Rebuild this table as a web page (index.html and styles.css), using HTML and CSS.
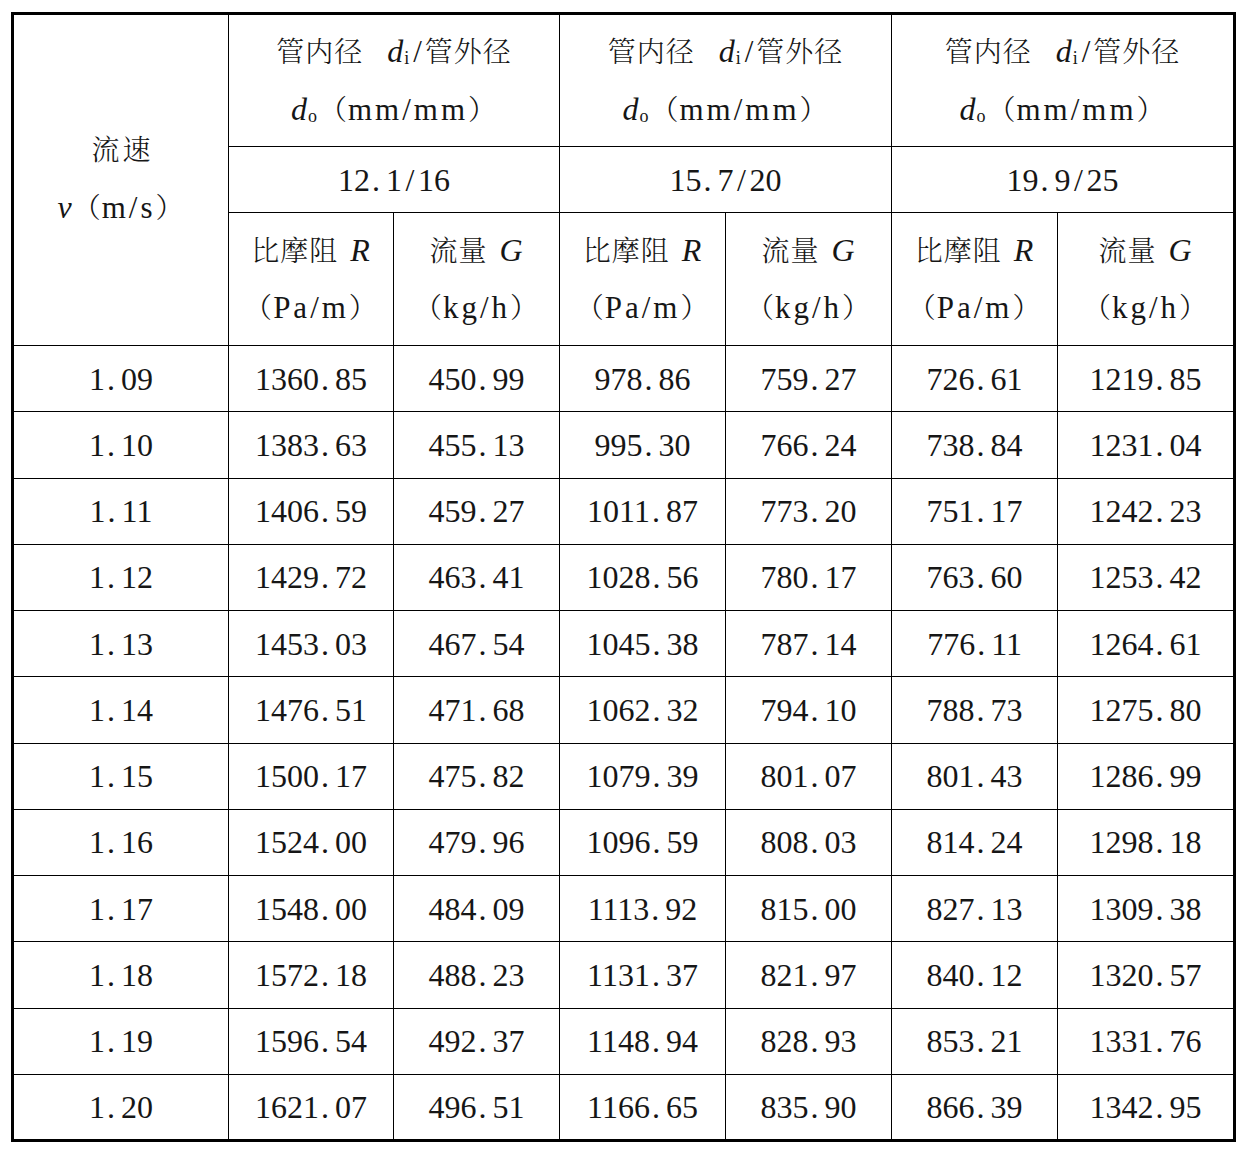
FILE: index.html
```html
<!DOCTYPE html>
<html lang="zh-CN">
<head>
<meta charset="utf-8">
<title>流速表</title>
<link rel="stylesheet" href="styles.css">
</head>
<body>
<table class="tbl">
  <colgroup>
    <col class="c0"><col class="c1"><col class="c2"><col class="c3"><col class="c4"><col class="c5"><col class="c6">
  </colgroup>
  <tbody>
    <tr class="h1">
      <td rowspan="3" class="head"><span class="wide">流速</span><br><i>v</i>（<span class="lt">m/s</span>）</td>
      <td colspan="2" class="head">管内径<i class="gap">d</i><sub>i</sub><span class="lt sep">/</span>管外径<br><i>d</i><sub>o</sub>（<span class="lt">mm/mm</span>）</td>
      <td colspan="2" class="head">管内径<i class="gap">d</i><sub>i</sub><span class="lt sep">/</span>管外径<br><i>d</i><sub>o</sub>（<span class="lt">mm/mm</span>）</td>
      <td colspan="2" class="head">管内径<i class="gap">d</i><sub>i</sub><span class="lt sep">/</span>管外径<br><i>d</i><sub>o</sub>（<span class="lt">mm/mm</span>）</td>
    </tr>
    <tr class="h2">
      <td colspan="2" class="num">12<span class="pt">.</span>1<span class="sl">/</span>16</td>
      <td colspan="2" class="num">15<span class="pt">.</span>7<span class="sl">/</span>20</td>
      <td colspan="2" class="num">19<span class="pt">.</span>9<span class="sl">/</span>25</td>
    </tr>
    <tr class="h3">
      <td class="head">比摩阻<i class="sym">R</i><br>（<span class="lt">Pa/m</span>）</td>
      <td class="head">流量<i class="sym">G</i><br>（<span class="lt">kg/h</span>）</td>
      <td class="head">比摩阻<i class="sym">R</i><br>（<span class="lt">Pa/m</span>）</td>
      <td class="head">流量<i class="sym">G</i><br>（<span class="lt">kg/h</span>）</td>
      <td class="head">比摩阻<i class="sym">R</i><br>（<span class="lt">Pa/m</span>）</td>
      <td class="head">流量<i class="sym">G</i><br>（<span class="lt">kg/h</span>）</td>
    </tr>
    <tr class="row"><td class="num">1<span class="pt">.</span>09</td><td class="num">1360<span class="pt">.</span>85</td><td class="num">450<span class="pt">.</span>99</td><td class="num">978<span class="pt">.</span>86</td><td class="num">759<span class="pt">.</span>27</td><td class="num">726<span class="pt">.</span>61</td><td class="num">1219<span class="pt">.</span>85</td></tr>
    <tr class="row"><td class="num">1<span class="pt">.</span>10</td><td class="num">1383<span class="pt">.</span>63</td><td class="num">455<span class="pt">.</span>13</td><td class="num">995<span class="pt">.</span>30</td><td class="num">766<span class="pt">.</span>24</td><td class="num">738<span class="pt">.</span>84</td><td class="num">1231<span class="pt">.</span>04</td></tr>
    <tr class="row"><td class="num">1<span class="pt">.</span>11</td><td class="num">1406<span class="pt">.</span>59</td><td class="num">459<span class="pt">.</span>27</td><td class="num">1011<span class="pt">.</span>87</td><td class="num">773<span class="pt">.</span>20</td><td class="num">751<span class="pt">.</span>17</td><td class="num">1242<span class="pt">.</span>23</td></tr>
    <tr class="row"><td class="num">1<span class="pt">.</span>12</td><td class="num">1429<span class="pt">.</span>72</td><td class="num">463<span class="pt">.</span>41</td><td class="num">1028<span class="pt">.</span>56</td><td class="num">780<span class="pt">.</span>17</td><td class="num">763<span class="pt">.</span>60</td><td class="num">1253<span class="pt">.</span>42</td></tr>
    <tr class="row"><td class="num">1<span class="pt">.</span>13</td><td class="num">1453<span class="pt">.</span>03</td><td class="num">467<span class="pt">.</span>54</td><td class="num">1045<span class="pt">.</span>38</td><td class="num">787<span class="pt">.</span>14</td><td class="num">776<span class="pt">.</span>11</td><td class="num">1264<span class="pt">.</span>61</td></tr>
    <tr class="row"><td class="num">1<span class="pt">.</span>14</td><td class="num">1476<span class="pt">.</span>51</td><td class="num">471<span class="pt">.</span>68</td><td class="num">1062<span class="pt">.</span>32</td><td class="num">794<span class="pt">.</span>10</td><td class="num">788<span class="pt">.</span>73</td><td class="num">1275<span class="pt">.</span>80</td></tr>
    <tr class="row"><td class="num">1<span class="pt">.</span>15</td><td class="num">1500<span class="pt">.</span>17</td><td class="num">475<span class="pt">.</span>82</td><td class="num">1079<span class="pt">.</span>39</td><td class="num">801<span class="pt">.</span>07</td><td class="num">801<span class="pt">.</span>43</td><td class="num">1286<span class="pt">.</span>99</td></tr>
    <tr class="row"><td class="num">1<span class="pt">.</span>16</td><td class="num">1524<span class="pt">.</span>00</td><td class="num">479<span class="pt">.</span>96</td><td class="num">1096<span class="pt">.</span>59</td><td class="num">808<span class="pt">.</span>03</td><td class="num">814<span class="pt">.</span>24</td><td class="num">1298<span class="pt">.</span>18</td></tr>
    <tr class="row"><td class="num">1<span class="pt">.</span>17</td><td class="num">1548<span class="pt">.</span>00</td><td class="num">484<span class="pt">.</span>09</td><td class="num">1113<span class="pt">.</span>92</td><td class="num">815<span class="pt">.</span>00</td><td class="num">827<span class="pt">.</span>13</td><td class="num">1309<span class="pt">.</span>38</td></tr>
    <tr class="row"><td class="num">1<span class="pt">.</span>18</td><td class="num">1572<span class="pt">.</span>18</td><td class="num">488<span class="pt">.</span>23</td><td class="num">1131<span class="pt">.</span>37</td><td class="num">821<span class="pt">.</span>97</td><td class="num">840<span class="pt">.</span>12</td><td class="num">1320<span class="pt">.</span>57</td></tr>
    <tr class="row"><td class="num">1<span class="pt">.</span>19</td><td class="num">1596<span class="pt">.</span>54</td><td class="num">492<span class="pt">.</span>37</td><td class="num">1148<span class="pt">.</span>94</td><td class="num">828<span class="pt">.</span>93</td><td class="num">853<span class="pt">.</span>21</td><td class="num">1331<span class="pt">.</span>76</td></tr>
    <tr class="row"><td class="num">1<span class="pt">.</span>20</td><td class="num">1621<span class="pt">.</span>07</td><td class="num">496<span class="pt">.</span>51</td><td class="num">1166<span class="pt">.</span>65</td><td class="num">835<span class="pt">.</span>90</td><td class="num">866<span class="pt">.</span>39</td><td class="num">1342<span class="pt">.</span>95</td></tr>
  </tbody>
</table>
</body>
</html>
```
FILE: styles.css
```css
html, body {
  margin: 0;
  padding: 0;
  background: #ffffff;
}

body {
  color: #161616;
  font-family: "Liberation Serif", "Noto Serif CJK SC", "Noto Sans CJK SC", serif;
}

.tbl {
  border-collapse: collapse;
  table-layout: fixed;
  width: 1225px;
  margin: 12px 0 0 11px;
  border: 3px solid #000000;
}

.c0 { width: 216px; }
.c1 { width: 165px; }
.c2 { width: 166px; }
.c3 { width: 166px; }
.c4 { width: 166px; }
.c5 { width: 166px; }
.c6 { width: 177px; }

.tbl td {
  border: 1px solid #000000;
  padding: 0;
  text-align: center;
  vertical-align: middle;
  white-space: nowrap;
}

.h1 { height: 133px; }
.h2 { height: 66px; }
.h3 { height: 133px; }
.row { height: 66.25px; }

.head {
  font-size: 28px;
  line-height: 56px;
  font-weight: 300;
  letter-spacing: 1px;
}

.head i {
  font-size: 32px;
  margin-right: 1px;
  letter-spacing: 0;
}

.head i.gap {
  margin-left: 24px;
}

.head i.sym {
  margin-left: 12px;
}

.lt {
  font-size: 31px;
  letter-spacing: 3px;
}

.sep {
  margin-left: 2px;
}

.head sub {
  font-size: 18px;
  line-height: 0;
  vertical-align: -2px;
  margin-right: 2px;
  letter-spacing: 0;
}

.wide {
  letter-spacing: 3px;
  margin-right: -3px;
}

.num {
  font-size: 32px;
  line-height: 40px;
}

.pt {
  display: inline-block;
  width: 16px;
  padding-left: 2px;
  box-sizing: border-box;
  text-align: left;
}

.sl {
  display: inline-block;
  width: 16px;
  text-align: center;
}
```
